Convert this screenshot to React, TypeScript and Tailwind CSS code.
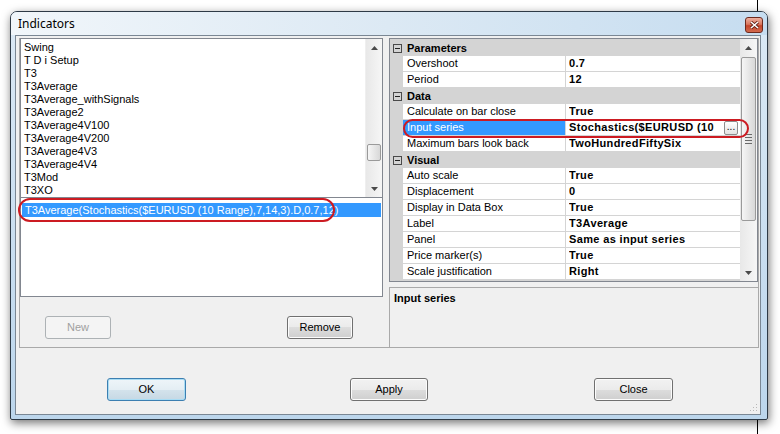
import React from 'react';

const ITEMS = [
  'Swing',
  'T D i Setup',
  'T3',
  'T3Average',
  'T3Average_withSignals',
  'T3Average2',
  'T3Average4V100',
  'T3Average4V200',
  'T3Average4V3',
  'T3Average4V4',
  'T3Mod',
  'T3XO',
];

type Row =
  | { cat: string }
  | { name: string; value: string; sel?: boolean; btn?: boolean };

const ROWS: Row[] = [
  { cat: 'Parameters' },
  { name: 'Overshoot', value: '0.7' },
  { name: 'Period', value: '12' },
  { cat: 'Data' },
  { name: 'Calculate on bar close', value: 'True' },
  { name: 'Input series', value: 'Stochastics($EURUSD (10', sel: true, btn: true },
  { name: 'Maximum bars look back', value: 'TwoHundredFiftySix' },
  { cat: 'Visual' },
  { name: 'Auto scale', value: 'True' },
  { name: 'Displacement', value: '0' },
  { name: 'Display in Data Box', value: 'True' },
  { name: 'Label', value: 'T3Average' },
  { name: 'Panel', value: 'Same as input series' },
  { name: 'Price marker(s)', value: 'True' },
  { name: 'Scale justification', value: 'Right' },
];

const Arrow = ({ down }: { down?: boolean }) => (
  <div className="h-[17px] flex items-center justify-center shrink-0">
    <svg width="7" height="4" viewBox="0 0 7 4">
      <path d={down ? 'M0 0h7L3.5 4z' : 'M0 4h7L3.5 0z'} fill="#4a4a4a" />
    </svg>
  </div>
);

const Button = ({
  label,
  className,
  isDefault,
  disabled,
}: {
  label: string;
  className: string;
  isDefault?: boolean;
  disabled?: boolean;
}) => (
  <div
    className={
      'h-[23px] rounded-[3px] border flex items-center justify-center text-[11px] shrink-0 ' +
      (disabled
        ? 'border-[#adb2b5] bg-[#f4f4f4] text-[#a0a0a0] '
        : isDefault
        ? 'border-[#3c7fb1] bg-[linear-gradient(#eef5f9,#e4eef4_50%,#d4e3ec_50%,#c6d8e4)] shadow-[inset_0_0_0_1px_#a8dcf4] text-black '
        : 'border-[#707070] bg-[linear-gradient(#f2f2f2,#ebebeb_50%,#dddddd_50%,#cfcfcf)] shadow-[inset_0_0_0_1px_#fcfcfc] text-black ') +
      className
    }
  >
    {label}
  </div>
);

const App: React.FC = () => {
  return (
    <div className="relative w-[780px] h-[434px] bg-white overflow-hidden font-['Liberation_Sans',Arial,sans-serif]">
      {/* desktop line behind the window */}
      <div className="absolute left-[757px] top-0 w-px h-[12px] bg-black" />
      <div className="absolute left-[757px] top-[420px] w-px h-[14px] bg-black" />

      <div className="relative ml-[10px] mt-[11px] w-[758px] h-[409px] flex flex-col border border-[#2e3a46] rounded-t-[7px] rounded-b-[2px] bg-linear-to-b from-[#dbe9f5] to-[#bcd6ec] shadow-[1px_3px_10px_rgba(0,0,0,0.55)]">
        {/* title bar */}
        <div className="h-[23px] flex items-center pl-[7px] pr-[4px] rounded-t-[6px] bg-linear-to-r from-[#f1f6fa] via-[#dce9f4] to-[#c6ddf0]">
          <span className="text-[12px] text-black font-['Noto_Sans',sans-serif] leading-none">Indicators</span>
          <div className="ml-auto mt-[2px] w-[18px] h-[16px] rounded-[3px] border border-[#6d2a1e] bg-[linear-gradient(#eeb0a0,#d9785f_45%,#c4452a_55%,#d26a4e)] flex items-center justify-center">
            <svg width="9" height="8" viewBox="0 0 9 8">
              <path d="M1 1l7 6M8 1L1 7" stroke="#5a1a10" strokeWidth="3" />
              <path d="M1 1l7 6M8 1L1 7" stroke="#fff" strokeWidth="1.6" />
            </svg>
          </div>
        </div>

        {/* client */}
        <div className="ml-[4px] w-[746px] h-[380px] border border-[#7a8794] bg-[#f0f0f0] flex flex-col pt-[2px] pl-[3px] pr-[2px] relative">
          <div className="w-[740px] h-[310px] flex border-l border-r border-b border-[#a9a9a9]">
            {/* left pane */}
            <div className="w-[363px] shrink-0 flex flex-col">
              <div className="h-[160px] border border-[#828790] bg-white flex">
                <div className="flex-1 pt-[2px] pl-[3px] text-[11px] text-black">
                  {ITEMS.map((it) => (
                    <div key={it} className="h-[13px] leading-[13px] whitespace-nowrap">
                      {it}
                    </div>
                  ))}
                </div>
                <div className="w-[17px] flex flex-col bg-linear-to-r from-[#e8e8e8] to-[#f6f6f6] border-l border-[#efefef]">
                  <Arrow />
                  <div className="flex-1">
                    <div className="mt-[88px] mx-[1px] h-[17px] rounded-[2px] border border-[#9a9a9a] bg-linear-to-r from-[#f6f6f6] to-[#d8d8d8]" />
                  </div>
                  <Arrow down />
                </div>
              </div>
              <div className="h-[100px] -mt-px border border-[#828790] bg-white pt-[5px] px-px relative">
                <div className="h-[14px] leading-[14px] bg-[#3399ff] text-white text-[11px] pl-[3px] whitespace-nowrap">
                  T3Average(Stochastics($EURUSD (10 Range),7,14,3).D,0.7,12)
                </div>
              </div>
              <div className="flex-1 flex items-start pt-[19px] pl-[25px] pr-[30px]">
                <Button label="New" disabled className="w-[66px]" />
                <Button label="Remove" className="w-[66px] ml-auto" />
              </div>
            </div>

            {/* right pane */}
            <div className="ml-[6px] flex-1 min-w-0 flex flex-col">
              <div className="h-[244px] border border-[#828790] flex pt-px bg-[#d4d4d4]">
                <div className="flex-1 min-w-0 flex flex-col text-[11px] text-black">
                  {ROWS.map((r, i) =>
                    'cat' in r ? (
                      <div key={i} className="h-[16px] flex items-center bg-[#d4d4d4]">
                        <div className="w-[13px] shrink-0 flex justify-center pl-[1px]">
                          <div className="w-[9px] h-[9px] border border-[#4a4a4a] flex items-center justify-center">
                            <div className="w-[5px] h-px bg-[#222]" />
                          </div>
                        </div>
                        <span className="pl-[4px] font-bold">{r.cat}</span>
                      </div>
                    ) : (
                      <div key={i} className="h-[16px] flex">
                        <div className="w-[13px] shrink-0 bg-[#d4d4d4]" />
                        <div
                          className={
                            'w-[163px] shrink-0 border-r border-b border-[#d4d4d4] pl-[4px] leading-[15px] whitespace-nowrap ' +
                            (r.sel ? 'bg-[#3399ff] text-white' : 'bg-white')
                          }
                        >
                          {r.name}
                        </div>
                        <div className="flex-1 min-w-0 flex bg-white border-b border-[#d4d4d4] pl-[3px] font-bold tracking-[0.35px] leading-[15px]">
                          <span className="flex-1 min-w-0 overflow-hidden whitespace-nowrap">{r.value}</span>
                          {r.btn && (
                            <div className="w-[14px] h-[14px] shrink-0 mt-px mr-[2px] ml-[2px] rounded-[2px] border border-[#8d8d8d] bg-linear-to-b from-white to-[#e3e3e3] flex items-end justify-center font-normal tracking-normal text-[10px] leading-[10px] pb-[2px]">
                              ...
                            </div>
                          )}
                        </div>
                      </div>
                    )
                  )}
                </div>
                <div className="w-[17px] shrink-0 flex flex-col bg-linear-to-r from-[#e8e8e8] to-[#f6f6f6] -mt-px">
                  <Arrow />
                  <div className="flex-1 flex flex-col">
                    <div className="mt-px mx-[1px] h-[164px] rounded-[2px] border border-[#9a9a9a] bg-linear-to-r from-[#f6f6f6] to-[#d8d8d8] flex flex-col items-center justify-center gap-[2px]">
                      <div className="w-[7px] h-px bg-[#6a6a6a]" />
                      <div className="w-[7px] h-px bg-[#6a6a6a]" />
                      <div className="w-[7px] h-px bg-[#6a6a6a]" />
                      <div className="w-[7px] h-px bg-[#6a6a6a]" />
                    </div>
                  </div>
                  <Arrow down />
                </div>
              </div>
              <div className="flex-1 mt-[5px] border-t border-l border-[#a9a9a9] pt-[4px] pl-[4px] text-[11px] font-bold text-black leading-[13px]">
                Input series
              </div>
            </div>
          </div>

          {/* dialog buttons */}
          <div className="flex pt-[30px] pl-[88px]">
            <Button label="OK" isDefault className="w-[79px]" />
            <Button label="Apply" className="w-[78px] ml-[164px]" />
            <Button label="Close" className="w-[79px] ml-[166px]" />
          </div>

          {/* resize grip */}
          <svg className="absolute right-[2px] bottom-[2px]" width="8" height="8" viewBox="0 0 8 8">
            <g fill="#b8b8b8">
              <rect x="6" y="0" width="1" height="1" />
              <rect x="3" y="3" width="1" height="1" />
              <rect x="6" y="3" width="1" height="1" />
              <rect x="0" y="6" width="1" height="1" />
              <rect x="3" y="6" width="1" height="1" />
              <rect x="6" y="6" width="1" height="1" />
            </g>
          </svg>

          {/* red highlight ovals */}
          <div className="absolute left-[2px] top-[162px] w-[317px] h-[24px] rounded-full border-2 border-[#cc1b22]" />
          <div className="absolute left-[387px] top-[83px] w-[346px] h-[19px] rounded-full border-2 border-[#cc1b22]" />
        </div>
      </div>
    </div>
  );
};

export default App;
